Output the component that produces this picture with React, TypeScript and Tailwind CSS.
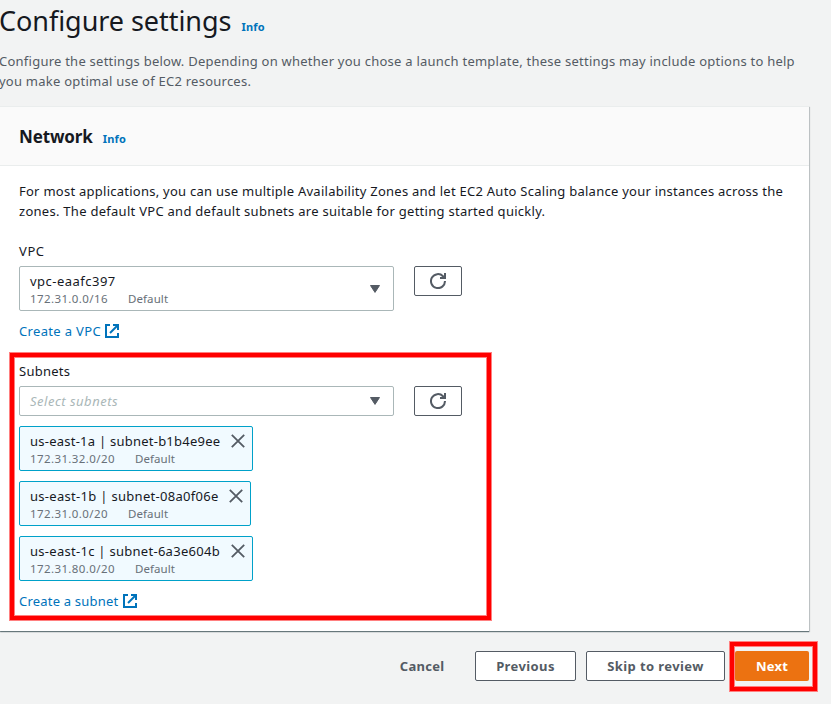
import React from "react";

function Frame({ className }: { className: string }) {
  return (
    <div className={`pointer-events-none absolute border border-[#ff8080] ${className}`}>
      <div className="h-full w-full border-4 border-[#ff0000]">
        <div className="h-full w-full border border-[#ff8080]" />
      </div>
    </div>
  );
}

function ExternalIcon() {
  return (
    <svg width="14" height="14" viewBox="0 0 14 14" fill="none" stroke="#0073bb" strokeWidth="2" className="shrink-0">
      <path d="M5 1H1v12h12V9" />
      <path d="M8 1h5v5" />
      <path d="M13 1L5 9" />
    </svg>
  );
}

function RefreshButton() {
  return (
    <button className="flex h-[30px] w-12 items-center justify-center rounded-[2px] border border-[#545b64] bg-white">
      <svg width="16" height="16" viewBox="0 0 16 16" fill="none" stroke="#545b64" strokeWidth="2">
        <path d="M15 8A7 7 0 1 1 13 3.2L14.6 5" />
        <path d="M10 5h5V0" />
      </svg>
    </button>
  );
}

function Caret() {
  return (
    <svg width="10" height="8" viewBox="0 0 10 8" fill="#545b64" stroke="#545b64" strokeLinejoin="round" className="shrink-0">
      <path d="M.5.5h9L5 7.4z" />
    </svg>
  );
}

function CloseIcon() {
  return (
    <svg width="14" height="14" viewBox="0 0 14 14" stroke="#545b64" strokeWidth="1.8" className="mt-[7px] shrink-0">
      <path d="M.8.8l12.4 12.4M13.2.8L.8 13.2" />
    </svg>
  );
}

function Detail({ cidr }: { cidr: string }) {
  return (
    <div className="flex gap-5 text-[11.5px] leading-4 text-[#687078]">
      <span className="tracking-[0.4px]">{cidr}</span>
      <span className="tracking-[0.1px]">Default</span>
    </div>
  );
}

const subnets = [
  { name: "us-east-1a | subnet-b1b4e9ee", cidr: "172.31.32.0/20", style: "w-[234px] tracking-[0.24px]" },
  { name: "us-east-1b | subnet-08a0f06e", cidr: "172.31.0.0/20", style: "w-[232px] tracking-[0.3px]" },
  { name: "us-east-1c | subnet-6a3e604b", cidr: "172.31.80.0/20", style: "w-[234px] tracking-[0.28px]" },
];

export default function App() {
  return (
    <div className="h-[704px] w-[831px] overflow-hidden whitespace-nowrap bg-[#f2f3f3] font-['Noto_Sans',sans-serif] text-[13px] leading-5 tracking-[0.24px] text-[#16191f]">
      <header className="-ml-px h-[106px]">
        <div className="flex h-[51px] items-baseline gap-[10px]">
          <h1 className="text-[27px] leading-[42px] tracking-[-0.05px]">Configure settings</h1>
          <a className="text-[11px] font-bold tracking-[0.25px] text-[#0073bb]">Info</a>
        </div>
        <p className="text-[#545b64]">
          Configure the settings below. Depending on whether you chose a launch template, these settings may include options to help
          <br />
          you make optimal use of EC2 resources.
        </p>
      </header>

      <main className="h-[525px] w-[809px] bg-white shadow-[0_1px_1px_0_rgba(0,28,36,0.5),1px_1px_1px_0_rgba(0,28,36,0.15)]">
        <div className="flex h-[60px] items-baseline gap-[10px] border-y border-[#eaeded] bg-[#fafafa] pl-[19px]">
          <h2 className="text-[17px] font-bold leading-[60px] tracking-[-0.15px]">Network</h2>
          <a className="text-[11px] font-bold tracking-[0.25px] text-[#0073bb]">Info</a>
        </div>
        <div className="relative flex flex-col pl-[19px] pt-[15px]">
          <p className="tracking-[0.255px]">
            For most applications, you can use multiple Availability Zones and let EC2 Auto Scaling balance your instances across the
            <br />
            <span className="tracking-[0.275px]">zones. The default VPC and default subnets are suitable for getting started quickly.</span>
          </p>
          <label className="mt-5 tracking-[0.6px]">VPC</label>
          <div className="mt-[5px] flex items-start gap-5">
            <div className="flex h-[45px] w-[375px] items-center justify-between rounded-[2px] border border-[#aab7b8] pl-[10px] pr-[13px]">
              <div>
                <div className="tracking-[0.48px]">vpc-eaafc397</div>
                <Detail cidr="172.31.0.0/16" />
              </div>
              <Caret />
            </div>
            <RefreshButton />
          </div>
          <a className="mt-[10px] flex items-center gap-1 text-[#0073bb]">
            <span className="tracking-[0.34px]">Create a VPC</span>
            <ExternalIcon />
          </a>
          <label className="mt-5">Subnets</label>
          <div className="mt-[5px] flex items-start gap-5">
            <div className="flex h-[30px] w-[375px] items-center justify-between rounded-[2px] border border-[#aab7b8] pl-[10px] pr-[13px]">
              <span className="italic tracking-[0.5px] text-[#aab7b8]">Select subnets</span>
              <Caret />
            </div>
            <RefreshButton />
          </div>
          <div className="mt-[10px] flex flex-col gap-[10px]">
            {subnets.map((s) => (
              <div key={s.name} className={`flex h-[45px] justify-between rounded-[2px] border border-[#00a1c9] bg-[#f1faff] pl-[10px] pr-[7px] ${s.style}`}>
                <div className="pt-1">
                  <div>{s.name}</div>
                  <Detail cidr={s.cidr} />
                </div>
                <CloseIcon />
              </div>
            ))}
          </div>
          <a className="mt-[10px] flex items-center gap-[5px] text-[#0073bb]">
            <span className="tracking-[0.2px]">Create a subnet</span>
            <ExternalIcon />
          </a>
          <Frame className="left-[9px] top-[186px] h-[269px] w-[483px]" />
        </div>
      </main>

      <footer className="mt-5 flex w-[809px] justify-end gap-[10px] font-bold tracking-[0.4px] text-[#545b64]">
        <button className="h-[30px] pl-5 pr-[20.5px] tracking-[0.3px]">Cancel</button>
        <button className="h-[30px] w-[101px] rounded-[2px] border border-[#545b64] bg-white">Previous</button>
        <button className="h-[30px] w-[139px] rounded-[2px] border border-[#545b64] bg-white">Skip to review</button>
        <div className="relative">
          <button className="block h-[30px] w-[74px] rounded-[2px] bg-[#ec7211] tracking-[0.25px] text-white">Next</button>
          <Frame className="-left-[6px] -top-[10px] h-[51px] w-[89px]" />
        </div>
      </footer>
    </div>
  );
}
